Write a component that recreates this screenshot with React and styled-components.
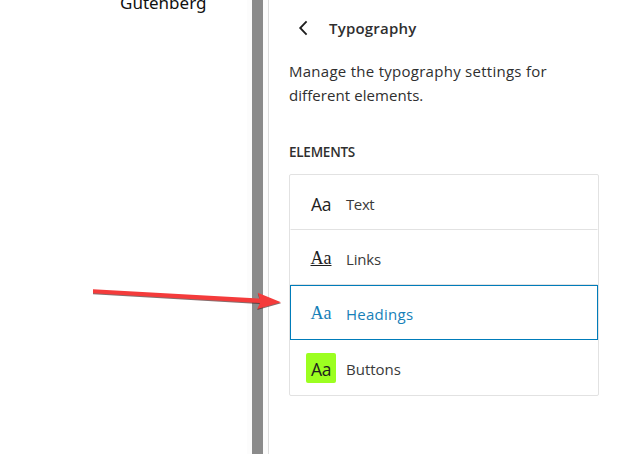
import React from "react";
import styled, { createGlobalStyle } from "styled-components";

const GlobalStyle = createGlobalStyle`
  * { box-sizing: border-box; }
  html, body { margin: 0; background: #fff; overflow: hidden; }
`;

const Screen = styled.div`
  position: relative;
  display: flex;
  width: 618px;
  height: 454px;
  overflow: hidden;
  background: #fff;
  color: #2f2f2f;
  font-family: "Open Sans", "Noto Sans", sans-serif;
  font-size: 15px;
`;

const Preview = styled.main`
  flex: 0 0 247px;
  padding-left: 120px;
`;

const PreviewText = styled.p`
  margin: -10px 0 0;
  font-family: "Noto Sans", sans-serif;
  font-size: 17px;
  line-height: 26px;
  white-space: nowrap;
  color: #111;
`;

const ScrollTrack = styled.div`
  flex: 0 0 21px;
  display: flex;
  justify-content: center;
  background: #fcfcfc;
`;

const ScrollThumb = styled.div`
  width: 11px;
  background: #8b8b8b;
`;

const Sidebar = styled.aside`
  flex: 1;
  border-left: 1px solid #ddd;
  padding: 16px 19px 0 20px;
`;

const Header = styled.header`
  display: flex;
  align-items: center;
  height: 24px;
  gap: 19px;
  padding-left: 9px;
`;

const BackButton = styled.button`
  display: flex;
  width: 12px;
  height: 24px;
  padding: 0;
  border: 0;
  background: none;
  color: #1e1e1e;
`;

const Title = styled.h2`
  margin: 0 0 1px;
  font-size: 15px;
  line-height: 24px;
  font-weight: 600;
  letter-spacing: 0.2px;
`;

const Description = styled.p`
  margin: 19px 0 0;
  line-height: 24px;
  white-space: nowrap;
`;

const DescriptionLine = styled.span`
  display: block;
  letter-spacing: ${(p) => p.$tracking};
`;

const SectionTitle = styled.h3`
  margin: 35px 0 0;
  font-size: 13.5px;
  line-height: 20px;
  font-weight: 600;
  letter-spacing: -0.25px;
  text-transform: uppercase;
`;

const ElementList = styled.div`
  margin-top: 12px;
  width: 310px;
  height: 222px;
  border: 1px solid #e2e2e2;
  border-radius: 2px;
`;

const ElementRow = styled.button`
  display: flex;
  align-items: center;
  gap: 10px;
  width: 100%;
  height: 55px;
  padding: 0 15px;
  border: 1px solid ${(p) => (p.$selected ? "#007cba" : "transparent")};
  border-bottom-color: ${(p) => (p.$selected ? "#007cba" : p.$last ? "transparent" : "#e2e2e2")};
  background: none;
  color: ${(p) => (p.$selected ? "#1780b8" : "#3a3a3a")};
  font: inherit;
  text-align: left;
`;

const Sample = styled.span`
  width: 30px;
  height: 30px;
  border-radius: 2px;
  background: ${(p) => p.$fill || "transparent"};
  color: ${(p) => (p.$selected ? "#1780b8" : "#1e1e1e")};
  font-family: ${(p) => (p.$serif ? '"Liberation Serif", serif' : '"Open Sans", sans-serif')};
  font-size: ${(p) => (p.$serif ? "18px" : "17.5px")};
  letter-spacing: ${(p) => (p.$serif ? "0" : "-0.5px")};
  line-height: ${(p) => (p.$serif ? "30px" : "32px")};
  text-align: center;
  text-decoration: ${(p) => (p.$underline ? "underline" : "none")};
`;

const Label = styled.span`
  padding-top: 2px;
  line-height: 24px;
  letter-spacing: ${(p) => p.$tracking || "0"};
`;

const Arrow = styled.svg`
  position: absolute;
  left: 88px;
  top: 282px;
  filter: drop-shadow(0 1px 0.5px rgba(70, 30, 30, 0.65));
`;

const elements = [
  { label: "Text", tracking: "-0.4px" },
  { label: "Links", serif: true, underline: true, tracking: "-0.15px" },
  { label: "Headings", serif: true, selected: true, tracking: "0.25px" },
  { label: "Buttons", fill: "#9cff20" },
];

export default function App() {
  return (
    <>
      <GlobalStyle />
      <Screen>
        <Preview>
          <PreviewText>Gutenberg</PreviewText>
        </Preview>
        <ScrollTrack>
          <ScrollThumb />
        </ScrollTrack>
        <Sidebar>
          <Header>
            <BackButton aria-label="Back">
              <svg width="12" height="24" viewBox="0 0 12 24" fill="none">
                <path d="M8.6 5.4 2.2 12l6.4 6.6" stroke="currentColor" strokeWidth="1.8" />
              </svg>
            </BackButton>
            <Title>Typography</Title>
          </Header>
          <Description>
            <DescriptionLine $tracking="0.27px">Manage the typography settings for</DescriptionLine>
            <DescriptionLine $tracking="0.07px">different elements.</DescriptionLine>
          </Description>
          <SectionTitle>Elements</SectionTitle>
          <ElementList>
            {elements.map((e, i) => (
              <ElementRow key={e.label} $selected={e.selected} $last={i === elements.length - 1}>
                <Sample $serif={e.serif} $underline={e.underline} $selected={e.selected} $fill={e.fill}>
                  Aa
                </Sample>
                <Label $tracking={e.tracking}>{e.label}</Label>
              </ElementRow>
            ))}
          </ElementList>
        </Sidebar>
        <Arrow width="200" height="36" viewBox="88 282 200 36" aria-hidden="true">
          <path d="M93 289.3 259.5 298.6 257.8 292.8 281 302.3 257.2 309 260 303 93 293.3Z" fill="#f43b3b" />
        </Arrow>
      </Screen>
    </>
  );
}
